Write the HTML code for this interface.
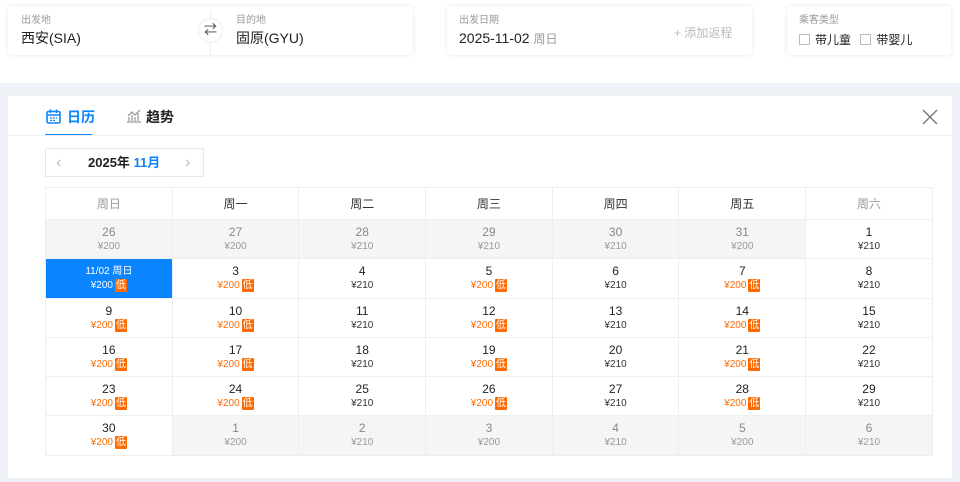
<!DOCTYPE html>
<html><head><meta charset="utf-8"><style>
*{margin:0;padding:0;box-sizing:border-box}
body{width:960px;height:482px;overflow:hidden;background:#fff;font-family:"Liberation Sans","Noto Sans CJK SC",sans-serif;color:#222;position:relative}
.card{position:absolute;top:6px;height:49px;background:#fff;border-radius:4px;box-shadow:0 0 4px rgba(0,0,0,.1)}
.lab{position:absolute;top:9px;font-size:10px;line-height:12px;color:#999}
.val{position:absolute;top:23px;font-size:14px;line-height:18px;color:#222}
.band{position:absolute;left:0;top:83px;width:960px;height:399px;background:#eef1f5}
.panel{position:absolute;left:8px;top:96px;width:944px;height:382px;background:#fff}
table{position:absolute;left:45px;top:187px;border-collapse:collapse;table-layout:fixed;width:887px}
td,th{border:1px solid #eceef0;text-align:center;width:126.7px;font-weight:normal}
th{height:32px;font-size:12px;color:#333}
td{height:39.3px;font-size:12px;line-height:15px;padding-top:5px;vertical-align:top}
td .p{font-size:10px;color:#333;line-height:14px}
td.g{background:#f5f5f5;color:#888}td.g .p{color:#999}
td .lo{color:#ff6a00}
.b{display:inline-block;background:#ff6a00;color:#fff;font-size:10px;line-height:13px;padding:0 1px;margin-left:2px;border-radius:1px;vertical-align:0}
td.s{background:#0a84ff;color:#fff}td.s .p{color:#fff}
</style></head><body>
<div class="card" style="left:8px;width:405px">
 <div class="lab" style="left:13px">出发地</div><div class="val" style="left:13px">西安(SIA)</div>
 <div style="position:absolute;left:202px;top:5px;width:1px;height:44px;background:#eee"></div>
 <div style="position:absolute;left:190px;top:12px;width:25px;height:25px;border-radius:50%;background:#fff;border:1px solid #eee;font-size:13px;text-align:center;line-height:22px;color:#444">⇄</div>
 <div class="lab" style="left:228px">目的地</div><div class="val" style="left:228px">固原(GYU)</div>
</div>
<div class="card" style="left:447px;width:305px">
 <div class="lab" style="left:12px">出发日期</div><div class="val" style="left:12px">2025-11-02 <span style="color:#999;font-size:12px">周日</span></div>
 <div style="position:absolute;left:227px;top:18px;font-size:12px;color:#bbb">+ 添加返程</div>
</div>
<div class="card" style="left:787px;width:164px">
 <div class="lab" style="left:12px">乘客类型</div>
 <div class="val" style="left:12px;font-size:12px;top:25px"><span style="display:inline-block;width:11px;height:11px;border:1px solid #bbb;vertical-align:-1px;margin-right:5px"></span>带儿童 <span style="display:inline-block;width:11px;height:11px;border:1px solid #bbb;vertical-align:-1px;margin:0 5px 0 6px"></span>带婴儿</div>
</div>
<div class="band"></div>
<div class="panel">
 <div style="position:absolute;left:38px;top:11px;font-size:14px;font-weight:bold;color:#0a84ff"><svg width="15" height="15" style="vertical-align:-2px;margin-right:6px"><rect x="1" y="2.5" width="13" height="11.5" rx="1.5" fill="none" stroke="#0a84ff" stroke-width="1.6"/><path d="M1 6h13M4.5 0.5v3.5M10.5 0.5v3.5" stroke="#0a84ff" stroke-width="1.6"/><path d="M4 9h2M7 9h2M10 9h1M4 11.5h2M7 11.5h2" stroke="#0a84ff" stroke-width="1.2"/></svg>日历</div>
 <div style="position:absolute;left:37px;top:38px;width:47px;height:2px;background:#0a84ff"></div>
 <div style="position:absolute;left:118px;top:11px;font-size:14px;font-weight:bold;color:#222"><svg width="16" height="14" style="vertical-align:-1px;margin-right:4px"><path d="M1 13h14M3 12V8M6 12V6M9 12V8M12 12V4M2 7l4-4 3 3 5-5" stroke="#999" fill="none" stroke-width="1.3"/></svg>趋势</div>
 <div style="position:absolute;left:0;top:39px;width:944px;height:1px;background:#eceef0"></div>
 <svg style="position:absolute;left:914px;top:13px" width="16" height="16"><path d="M1 1L15 15M15 1L1 15" stroke="#777" stroke-width="1.4"/></svg>
 <div style="position:absolute;left:37px;top:52px;width:159px;height:29px;border:1px solid #e4e6e8;border-radius:2px;font-size:13px;font-weight:bold;line-height:27px">
  <span style="position:absolute;left:10px;color:#bbb;font-weight:normal;font-size:16px">‹</span>
  <span style="position:absolute;left:42px">2025年 <span style="color:#0a84ff">11月</span></span>
  <span style="position:absolute;left:139px;color:#bbb;font-weight:normal;font-size:16px">›</span>
 </div>
</div>
<table>
<tr><th style="color:#999">周日</th><th>周一</th><th>周二</th><th>周三</th><th>周四</th><th>周五</th><th style="color:#999">周六</th></tr>
<tr><td class="g">26<div class="p">¥200</div></td><td class="g">27<div class="p">¥200</div></td><td class="g">28<div class="p">¥210</div></td><td class="g">29<div class="p">¥210</div></td><td class="g">30<div class="p">¥210</div></td><td class="g">31<div class="p">¥200</div></td><td>1<div class="p">¥210</div></td></tr>
<tr><td class="s" style="font-size:10px">11/02 周日<div class="p">¥200<span class="b">低</span></div></td><td>3<div class="p"><span class="lo">¥200</span><span class="b">低</span></div></td><td>4<div class="p">¥210</div></td><td>5<div class="p"><span class="lo">¥200</span><span class="b">低</span></div></td><td>6<div class="p">¥210</div></td><td>7<div class="p"><span class="lo">¥200</span><span class="b">低</span></div></td><td>8<div class="p">¥210</div></td></tr>
<tr><td>9<div class="p"><span class="lo">¥200</span><span class="b">低</span></div></td><td>10<div class="p"><span class="lo">¥200</span><span class="b">低</span></div></td><td>11<div class="p">¥210</div></td><td>12<div class="p"><span class="lo">¥200</span><span class="b">低</span></div></td><td>13<div class="p">¥210</div></td><td>14<div class="p"><span class="lo">¥200</span><span class="b">低</span></div></td><td>15<div class="p">¥210</div></td></tr>
<tr><td>16<div class="p"><span class="lo">¥200</span><span class="b">低</span></div></td><td>17<div class="p"><span class="lo">¥200</span><span class="b">低</span></div></td><td>18<div class="p">¥210</div></td><td>19<div class="p"><span class="lo">¥200</span><span class="b">低</span></div></td><td>20<div class="p">¥210</div></td><td>21<div class="p"><span class="lo">¥200</span><span class="b">低</span></div></td><td>22<div class="p">¥210</div></td></tr>
<tr><td>23<div class="p"><span class="lo">¥200</span><span class="b">低</span></div></td><td>24<div class="p"><span class="lo">¥200</span><span class="b">低</span></div></td><td>25<div class="p">¥210</div></td><td>26<div class="p"><span class="lo">¥200</span><span class="b">低</span></div></td><td>27<div class="p">¥210</div></td><td>28<div class="p"><span class="lo">¥200</span><span class="b">低</span></div></td><td>29<div class="p">¥210</div></td></tr>
<tr><td>30<div class="p"><span class="lo">¥200</span><span class="b">低</span></div></td><td class="g">1<div class="p">¥200</div></td><td class="g">2<div class="p">¥210</div></td><td class="g">3<div class="p">¥200</div></td><td class="g">4<div class="p">¥210</div></td><td class="g">5<div class="p">¥200</div></td><td class="g">6<div class="p">¥210</div></td></tr>
</table>
</body></html>
